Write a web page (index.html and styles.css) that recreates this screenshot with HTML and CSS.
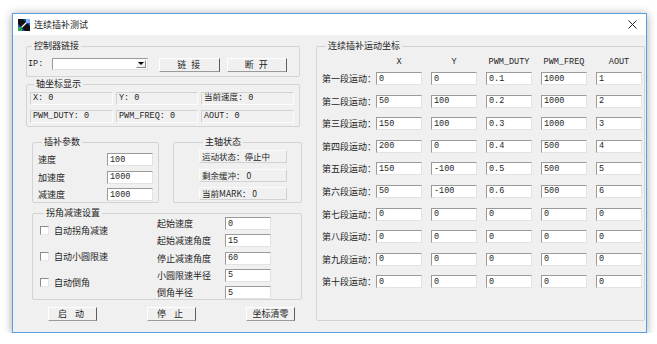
FILE: index.html
```html
<!DOCTYPE html>
<html lang="zh-CN">
<head>
  <meta charset="UTF-8">
  <meta name="viewport" content="width=device-width, initial-scale=1.0">
  <title>连续插补测试</title>
  <link rel="stylesheet" href="styles.css">
</head>
<body>
  <div class="window">
    <div class="titlebar">
      <svg class="app-icon" width="12" height="12" viewBox="0 0 12 12">
        <rect x="0" y="0" width="12" height="12" fill="#1f55c8"/>
        <path d="M0 0 L5 0 L12 7 L12 12 L7 12 L0 5 Z" fill="#111"/>
        <path d="M2 10 L10 2" stroke="#fff" stroke-width="1.2"/>
        <rect x="0" y="8" width="4" height="4" fill="#2fa84a"/>
        <rect x="8" y="0" width="4" height="4" fill="#7fb8f5"/>
      </svg>
      <span class="title">连续插补测试</span>
      <svg class="close" width="9" height="9" viewBox="0 0 9 9">
        <path d="M0.5 0.5 L8.5 8.5 M8.5 0.5 L0.5 8.5" stroke="#222" stroke-width="1"/>
      </svg>
    </div>

    <div class="client">
      <div class="left-col">
        <fieldset class="group conn">
          <legend>控制器链接</legend>
          <div class="conn-row">
            <span class="mono ip-label">IP:</span>
            <div class="combo">
              <span class="combo-btn">
                <svg width="6" height="4" viewBox="0 0 6 4"><path d="M0 0 H6 L3 3 Z" fill="#000"/></svg>
              </span>
            </div>
            <button class="btn btn-link spaced" type="button">链 接</button>
            <button class="btn btn-cut spaced" type="button">断 开</button>
          </div>
        </fieldset>

        <fieldset class="group axis">
          <legend>轴坐标显示</legend>
          <div class="axis-grid">
            <div class="static">X: 0</div>
            <div class="static">Y: 0</div>
            <div class="static">当前速度: 0</div>
            <div class="static">PWM_DUTY: 0</div>
            <div class="static">PWM_FREQ: 0</div>
            <div class="static">AOUT: 0</div>
          </div>
        </fieldset>

        <div class="mid-row">
          <fieldset class="group interp">
            <legend>插补参数</legend>
            <div class="param-grid">
              <span class="lbl">速度</span><input class="field" value="100">
              <span class="lbl">加速度</span><input class="field" value="1000">
              <span class="lbl">减速度</span><input class="field" value="1000">
            </div>
          </fieldset>

          <fieldset class="group spindle">
            <legend>主轴状态</legend>
            <div class="status-list">
              <div class="static status">运动状态：停止中</div>
              <div class="static status">剩余缓冲： 0</div>
              <div class="static status">当前MARK： 0</div>
            </div>
          </fieldset>
        </div>

        <fieldset class="group corner">
          <legend>拐角减速设置</legend>
          <div class="corner-body">
            <div class="checks">
              <label class="check"><span class="box"></span>自动拐角减速</label>
              <label class="check"><span class="box"></span>自动小圆限速</label>
              <label class="check"><span class="box"></span>自动倒角</label>
            </div>
            <div class="corner-grid">
              <span class="lbl">起始速度</span><input class="field" value="0">
              <span class="lbl">起始减速角度</span><input class="field" value="15">
              <span class="lbl">停止减速角度</span><input class="field" value="60">
              <span class="lbl">小圆限速半径</span><input class="field" value="5">
              <span class="lbl">倒角半径</span><input class="field" value="5">
            </div>
          </div>
        </fieldset>

        <div class="actions">
          <button class="btn act wide" type="button">启 动</button>
          <button class="btn act wide" type="button">停 止</button>
          <button class="btn act" type="button">坐标清零</button>
        </div>
      </div>

      <fieldset class="group segments">
        <legend>连续插补运动坐标</legend>
        <div class="seg-head">
          <span></span>
          <span class="mono">X</span>
          <span class="mono">Y</span>
          <span class="mono">PWM_DUTY</span>
          <span class="mono">PWM_FREQ</span>
          <span class="mono">AOUT</span>
        </div>
        <div class="seg-grid">
          <span class="lbl">第一段运动：</span>
          <input class="field" value="0"><input class="field" value="0"><input class="field" value="0.1"><input class="field" value="1000"><input class="field" value="1">
          <span class="lbl">第二段运动：</span>
          <input class="field" value="50"><input class="field" value="100"><input class="field" value="0.2"><input class="field" value="1000"><input class="field" value="2">
          <span class="lbl">第三段运动：</span>
          <input class="field" value="150"><input class="field" value="100"><input class="field" value="0.3"><input class="field" value="1000"><input class="field" value="3">
          <span class="lbl">第四段运动：</span>
          <input class="field" value="200"><input class="field" value="0"><input class="field" value="0.4"><input class="field" value="500"><input class="field" value="4">
          <span class="lbl">第五段运动：</span>
          <input class="field" value="150"><input class="field" value="-100"><input class="field" value="0.5"><input class="field" value="500"><input class="field" value="5">
          <span class="lbl">第六段运动：</span>
          <input class="field" value="50"><input class="field" value="-100"><input class="field" value="0.6"><input class="field" value="500"><input class="field" value="6">
          <span class="lbl">第七段运动：</span>
          <input class="field" value="0"><input class="field" value="0"><input class="field" value="0"><input class="field" value="0"><input class="field" value="0">
          <span class="lbl">第八段运动：</span>
          <input class="field" value="0"><input class="field" value="0"><input class="field" value="0"><input class="field" value="0"><input class="field" value="0">
          <span class="lbl">第九段运动：</span>
          <input class="field" value="0"><input class="field" value="0"><input class="field" value="0"><input class="field" value="0"><input class="field" value="0">
          <span class="lbl">第十段运动：</span>
          <input class="field" value="0"><input class="field" value="0"><input class="field" value="0"><input class="field" value="0"><input class="field" value="0">
        </div>
      </fieldset>
    </div>
  </div>
</body>
</html>
```

FILE: styles.css
```css
body {
  margin: 0;
  background-color: #fff;
  font-family: "Noto Sans CJK SC", sans-serif;
  font-size: 9px;
  color: #1e1e1e;
}
.window {
  box-sizing: border-box;
  width: 635px;
  height: 320px;
  margin: 13px 0 0 12px;
  border: 1px solid #5a9ee6;
  background-color: #f0f0f0;
  box-shadow: 0 1px 9px rgba(0, 0, 0, 0.35);
}
.titlebar {
  display: flex;
  align-items: center;
  height: 21px;
  padding-left: 5px;
  background-color: #fff;
}
.app-icon {
  margin-right: 4px;
}
.title {
  font-size: 9px;
  line-height: 12px;
}
.close {
  margin-left: auto;
  margin-right: 9px;
}
.client {
  display: flex;
  padding: 5px 0 0 13px;
}
.left-col {
  width: 276px;
}
.mono {
  font-family: "Liberation Mono", "Noto Sans CJK SC", monospace;
  font-size: 8.5px;
}

/* group boxes */
.group {
  box-sizing: border-box;
  min-width: 0;
  margin: 0;
  padding: 0;
  border: 1px solid #d3d3d3;
  border-radius: 2px;
}
.group legend {
  margin-left: 4px;
  padding: 0 2px;
  font-size: 9px;
  line-height: 12px;
}

/* controller link */
.conn {
  width: 274px;
  padding: 6px 0 4px 1px;
}
.conn-row {
  display: flex;
  align-items: flex-start;
  height: 14px;
}
.ip-label {
  width: 24px;
  line-height: 12px;
}
.combo {
  box-sizing: border-box;
  display: flex;
  justify-content: flex-end;
  width: 96px;
  height: 12px;
  padding: 1px;
  border: 1px solid;
  border-color: #9a9a9a #e3e3e3 #e3e3e3 #9a9a9a;
  background-color: #fff;
}
.combo-btn {
  box-sizing: border-box;
  display: flex;
  align-items: center;
  justify-content: center;
  width: 10px;
  height: 8px;
  border: 1px solid;
  border-color: #fff #8a8a8a #8a8a8a #fff;
  background-color: #f0f0f0;
}
.btn {
  box-sizing: border-box;
  height: 14px;
  margin: 0;
  padding: 0;
  border: 1px solid;
  border-color: #fff #5e5e5e #9a9a9a #fff;
  background-color: #f0f0f0;
  font-family: "Noto Sans CJK SC", sans-serif;
  font-size: 9px;
  line-height: 12px;
  color: #1e1e1e;
}
.spaced {
  letter-spacing: 1.5px;
}
.wide {
  letter-spacing: 3px;
}
.btn-link {
  width: 61px;
  margin-left: 11px;
}
.btn-cut {
  width: 60px;
  margin-left: 7px;
}

/* axis display */
.axis {
  width: 274px;
  margin-top: 1px;
  padding: 2px 0 3px 3px;
}
.axis-grid {
  display: grid;
  grid-template-columns: 83px 82px 93px;
  grid-auto-rows: 13px;
  column-gap: 3px;
  row-gap: 5px;
}
.static {
  box-sizing: border-box;
  height: 13px;
  padding: 0 2px;
  border: 1px solid;
  border-color: #d2d2d2 #fbfbfb #fbfbfb #d2d2d2;
  font-family: "Liberation Mono", "Noto Sans CJK SC", monospace;
  font-size: 8.5px;
  line-height: 11px;
  white-space: nowrap;
}

/* interpolation + spindle */
.mid-row {
  display: flex;
  margin: 9px 0 0 6px;
}
.interp {
  width: 127px;
  padding: 5px 0 1px 5px;
}
.param-grid {
  display: grid;
  grid-template-columns: 69px 46px;
  grid-auto-rows: 13px;
  row-gap: 4.5px;
  align-items: center;
}
.lbl {
  line-height: 13px;
  white-space: nowrap;
}
.spindle {
  width: 129px;
  margin-left: 14px;
  padding: 2px 0 2px 25px;
}
.status-list {
  display: flex;
  flex-direction: column;
  gap: 5.5px;
}
.status {
  width: 88px;
  border-color: #fbfbfb #d2d2d2 #d2d2d2 #fbfbfb;
  font-family: "Noto Sans CJK SC", sans-serif;
  font-size: 8.5px;
}

/* inputs */
.field {
  box-sizing: border-box;
  width: 46px;
  height: 13px;
  margin: 0;
  padding: 0 2px;
  border: 1px solid;
  border-color: #9a9a9a #e3e3e3 #e3e3e3 #9a9a9a;
  background-color: #fff;
  font-family: "Liberation Mono", monospace;
  font-size: 8.5px;
  line-height: 11px;
  color: #1e1e1e;
  outline: none;
}

/* corner deceleration */
.corner {
  width: 270px;
  margin: 4px 0 0 6px;
  padding: 0 0 0 7px;
}
.corner-body {
  display: flex;
}
.checks {
  display: flex;
  flex-direction: column;
  gap: 13px;
  width: 117px;
  margin-top: 5px;
}
.check {
  display: flex;
  align-items: center;
  height: 13px;
}
.box {
  box-sizing: border-box;
  width: 9px;
  height: 9px;
  margin-right: 5px;
  border: 1px solid;
  border-color: #8a8a8a #e6e6e6 #e6e6e6 #8a8a8a;
  background-color: #fff;
}
.corner-grid {
  display: grid;
  grid-template-columns: 68px 46px;
  grid-auto-rows: 13px;
  row-gap: 4.25px;
  margin-top: -2px;
}

/* bottom buttons */
.actions {
  display: flex;
  gap: 50px;
  margin: 7px 0 0 22px;
}
.act {
  width: 49px;
}

/* segment table */
.segments {
  width: 329px;
  margin-left: 14px;
  padding: 5px 0 8px 5px;
}
.seg-head,
.seg-grid {
  display: grid;
  grid-template-columns: 54px repeat(5, 55px);
}
.seg-head {
  height: 10px;
  margin-bottom: 5px;
}
.seg-head span {
  width: 46px;
  line-height: 10px;
  text-align: center;
}
.seg-grid {
  grid-auto-rows: 13px;
  row-gap: 9.6px;
}
```
